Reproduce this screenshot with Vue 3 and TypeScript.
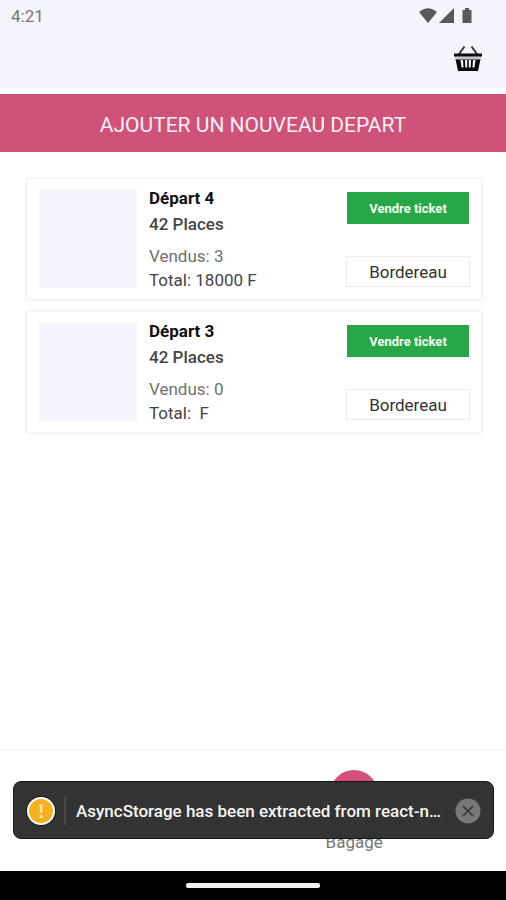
<script setup lang="ts">
import { ref } from 'vue'

interface Departure {
  id: number
  seats: number
  sold: number
  total: string
}

const departures: Departure[] = [
  { id: 4, seats: 42, sold: 3, total: '18000' },
  { id: 3, seats: 42, sold: 0, total: '' },
]

const warningVisible = ref(true)
</script>

<template>
  <div class="screen">
    <header class="top">
      <div class="status">
        <span class="clock">4:21</span>
        <svg class="status-icons" viewBox="0 0 56 18" aria-hidden="true">
          <path d="M0 5Q9 -2.600 18 5L9 16Z" />
          <path d="M35 1V16H20Z" />
          <path d="M43.500 3H46V1H50V3H52.500V16H43.500Z" />
        </svg>
      </div>
      <div class="toolbar">
        <button class="basket" type="button" aria-label="Panier">
          <svg viewBox="0 0 30 28" aria-hidden="true">
            <path class="handle" d="M6 10L11.500 2.500M24 10L18.500 2.500" />
            <path class="body" fill-rule="evenodd" d="M2.500 15H27.500L25 27H5ZM7.500 16L8.500 23.500H10.500L10 16ZM12 16L12.300 23.500H14.200V16ZM15.800 16V23.500H17.700L18 16ZM20 16L19.500 23.500H21.500L22.500 16Z" />
            <path class="shine" d="M2 14H28" />
            <path class="rim" d="M1 11H29" />
          </svg>
        </button>
      </div>
    </header>

    <button class="add" type="button">AJOUTER UN NOUVEAU DEPART</button>

    <main class="list">
      <article v-for="d in departures" :key="d.id" class="card">
        <div class="thumb"></div>
        <div class="info">
          <h2 class="name">Départ {{ d.id }}</h2>
          <p class="seats">{{ d.seats }} Places</p>
          <p class="sold">Vendus: {{ d.sold }}</p>
          <p class="total">{{ `Total: ${d.total} F` }}</p>
        </div>
        <div class="actions">
          <button class="sell" type="button">Vendre ticket</button>
          <button class="slip" type="button">Bordereau</button>
        </div>
      </article>
    </main>

    <footer class="bottom">
      <nav class="tabs">
        <a class="tab" href="#bagage">
          <span class="dot"></span>
          <span>Bagage</span>
        </a>
      </nav>
      <div class="system"><span class="pill"></span></div>
      <div v-if="warningVisible" class="toast" role="alert">
        <svg class="warn" viewBox="0 0 30 30" aria-hidden="true">
          <circle cx="15" cy="15" r="15" fill="#1d1d1d" />
          <circle cx="15" cy="15" r="13" fill="#f9b020" stroke="#fff" stroke-width="2" />
          <path d="M13.500 8H16.500L16 17H14ZM13.500 19H16.500V22H13.500Z" fill="#ffe9b5" />
        </svg>
        <span class="rule"></span>
        <p class="message">AsyncStorage has been extracted from react-n…</p>
        <button class="close" type="button" aria-label="Fermer" @click="warningVisible = false">
          <svg viewBox="0 0 26 26" aria-hidden="true">
            <circle cx="13" cy="13" r="12.500" fill="#777" />
            <path d="M8 8L18 18M18 8L8 18" stroke="#333" stroke-width="1.500" />
          </svg>
        </button>
      </div>
    </footer>
  </div>
</template>

<style>
body {
  margin: 0;
  background: #fff;
}
</style>

<style scoped>
.screen {
  min-height: 100vh;
  display: flex;
  flex-direction: column;
  background: #fff;
  font-family: Roboto, "Liberation Sans", sans-serif;
  font-size: 17px;
  color: #444;
}
button {
  font-family: inherit;
  padding: 0;
  border: 0;
  cursor: pointer;
}
h2,
p {
  margin: 0;
}
.top {
  background: #f5f4fd;
  padding-bottom: 16px;
  margin-bottom: 6px;
}
.status {
  display: flex;
  justify-content: space-between;
  align-items: center;
  height: 32px;
  padding: 0 31px 0 11px;
}
.clock {
  color: #77777b;
}
.status-icons {
  width: 56px;
  height: 18px;
  fill: #59595c;
}
.toolbar {
  display: flex;
  justify-content: flex-end;
  padding: 12px 23px 0 0;
}
.basket {
  background: none;
  width: 30px;
  height: 28px;
}
.basket svg {
  display: block;
  width: 30px;
  height: 28px;
}
.handle {
  fill: none;
  stroke: #333;
  stroke-width: 2;
}
.body {
  fill: #0a0a0a;
}
.rim {
  stroke: #0a0a0a;
  stroke-width: 3;
}
.shine {
  stroke: #c4c4c8;
  stroke-width: 3;
}
.add {
  height: 58px;
  padding-top: 3px;
  background: #cf5278;
  color: #fff0f5;
  font-size: 21px;
}
.list {
  flex: 1;
  display: flex;
  flex-direction: column;
  gap: 9px;
  padding: 25px 23px 25px 25px;
}
.card {
  display: flex;
  align-items: flex-start;
  gap: 12px;
  padding: 11px 11px 7px 12px;
  border: 2px solid #f5f5f5;
  border-radius: 3px;
}
.thumb {
  width: 98px;
  height: 98px;
  background: #f5f4fd;
}
.info {
  flex: 1;
  line-height: 24px;
  white-space: pre;
}
.name {
  font-size: 17px;
  font-weight: 700;
  line-height: 24px;
  color: #111;
  margin-top: -4px;
}
.seats {
  font-weight: 500;
  line-height: 28px;
  margin-bottom: 6px;
}
.sold {
  color: #707070;
}
.actions {
  display: flex;
  flex-direction: column;
  justify-content: space-between;
  width: 124px;
  height: 97px;
}
.sell {
  height: 32px;
  margin: 2px 1px 0;
  background: #27a745;
  color: #f2fff4;
  font-size: 13px;
  font-weight: 700;
}
.slip {
  height: 31px;
  padding-top: 1px;
  border: 1px solid #ececec;
  background: #fff;
  color: #333;
  font-size: 17px;
}
.bottom {
  position: relative;
}
.tabs {
  display: grid;
  grid-template-columns: 40% 60%;
  height: 101px;
  padding-top: 19px;
  border-top: 2px solid #f5f5f5;
}
.tab {
  grid-column: 2;
  display: flex;
  flex-direction: column;
  align-items: center;
  gap: 14px;
  color: #777;
  line-height: 20px;
  text-decoration: none;
}
.dot {
  width: 48px;
  height: 48px;
  border-radius: 50%;
  background: #d4507a;
}
.system {
  display: flex;
  justify-content: center;
  align-items: center;
  height: 29px;
  background: #000;
}
.pill {
  width: 134px;
  height: 5px;
  border-radius: 2px;
  background: #f2f2f2;
}
.toast {
  position: absolute;
  left: 13px;
  right: 12px;
  bottom: 61px;
  box-sizing: border-box;
  height: 58px;
  display: flex;
  align-items: center;
  padding: 2px 12px 0;
  border: 1px solid #161616;
  border-radius: 8px;
  background: #333;
  color: #f5f5f5;
}
.warn {
  flex: none;
  width: 30px;
  height: 30px;
}
.rule {
  flex: none;
  width: 2px;
  height: 28px;
  margin: 0 10px 0 8px;
  background: #484848;
}
.message {
  flex: 1;
  min-width: 0;
  overflow: hidden;
  text-overflow: ellipsis;
  white-space: nowrap;
  font-size: 17px;
  font-weight: 500;
  line-height: 24px;
}
.close {
  flex: none;
  width: 26px;
  height: 26px;
  margin-left: 8px;
  background: none;
}
.close svg {
  display: block;
}
</style>
